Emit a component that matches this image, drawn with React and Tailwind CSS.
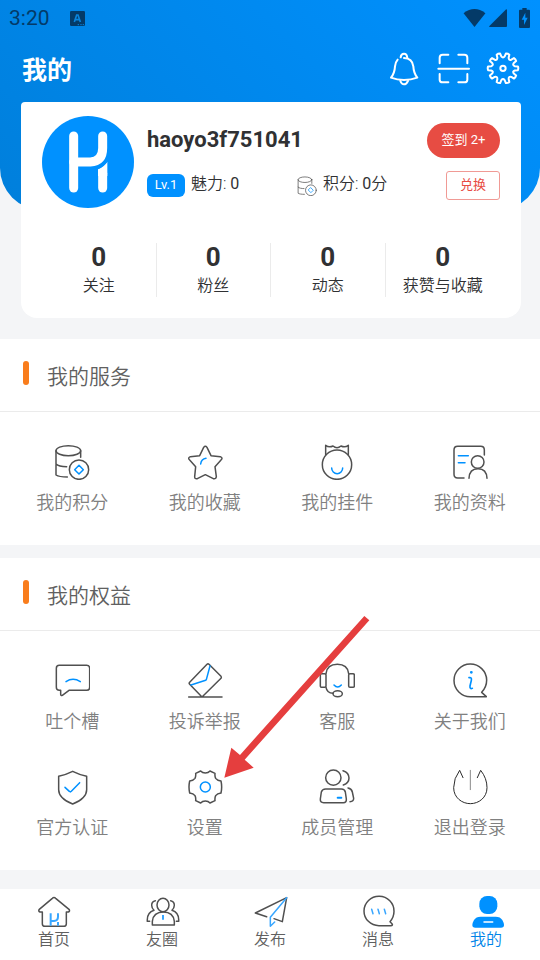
import React from "react";

const DARK = "#505050";
const BLUE = "#0091ff";

function Icon({ children, className = "size-9", stroke = DARK, width = 4.5 }) {
  return (
    <svg
      viewBox="0 0 108 108"
      className={className}
      fill="none"
      stroke={stroke}
      strokeWidth={width}
      strokeLinecap="round"
      strokeLinejoin="round"
      aria-hidden="true"
    >
      {children}
    </svg>
  );
}

const PointsIcon = ({ className, width }) => (
  <Icon className={className} width={width}>
    <ellipse cx="43" cy="20" rx="37" ry="15" />
    <path d="M6 20V93C12 97 24 99 40 99M6 60C12 66 24 68 38 68M80 20V40" />
    <circle cx="75" cy="77" r="29" />
    <path d="M75 64L88 77L75 90L62 77Z" stroke={BLUE} />
  </Icon>
);

const StarIcon = () => (
  <Icon>
    <path d="M50 10Q55 3 60 10L72 35L100 38Q109 42 102 48L84 68L88 98Q87 106 79 104L55 92L31 104Q23 106 23 98L26 68L8 48Q1 42 10 38L38 35Z" />
    <path d="M41 60Q43 45 57 43" stroke={BLUE} />
  </Icon>
);

const PendantIcon = () => (
  <Icon>
    <circle cx="54" cy="62" r="44" />
    <path d="M20 32V4Q30 12 42 6Q48 11 54 11Q60 11 66 6Q78 12 88 4V32" />
    <path d="M38 72A16.500 17 0 0 0 71 72" stroke={BLUE} />
  </Icon>
);

const ProfileIcon = () => (
  <Icon>
    <path d="M97 33V18Q97 7 86 7H17Q6 7 6 18V91Q6 102 17 102H36" />
    <circle cx="77" cy="54" r="19" />
    <path d="M51 103Q52 74 78 74Q104 74 105 103" />
    <path d="M19 35H49M19 56H39" stroke={BLUE} />
  </Icon>
);

const ComplaintIcon = () => (
  <Icon>
    <path d="M16 7H98Q107 7 107 16V73Q107 82 98 82H45L25 97Q20 99 20 94V82H16Q7 82 7 73V16Q7 7 16 7Z" />
    <path d="M36 56Q57 42 79 56" stroke={BLUE} />
  </Icon>
);

const ReportIcon = () => (
  <Icon>
    <path d="M60 4Q63 1 66 4L102 40Q104 43 102 46L45 102L8 64Q5 61 8 58ZM5 102H105" />
    <path d="M69 9L58 50L56 52L12 66" stroke={BLUE} />
  </Icon>
);

const ServiceIcon = () => (
  <Icon>
    <rect x="4" y="32" width="17" height="41" rx="4" />
    <rect x="89" y="32" width="17" height="41" rx="4" />
    <path d="M21 32Q24 4 55 4Q86 4 89 32M21 73Q24 90 42 91" />
    <ellipse cx="56" cy="92" rx="14" ry="9" />
    <path d="M45 66Q56 78 67 66" stroke={BLUE} />
  </Icon>
);

const AboutIcon = () => (
  <Icon>
    <path d="M55 101H103L89 88Q104 72 104 51A49 49 0 1 0 55 101Z" />
    <circle cx="58" cy="28" r="2" stroke={BLUE} />
    <path d="M51 44Q60 42 58 52L54 69Q53 79 61 76" stroke={BLUE} strokeWidth="5" />
  </Icon>
);

const ShieldIcon = () => (
  <Icon>
    <path d="M56 7Q76 17 98 22V62Q98 88 56 105Q14 88 14 62V22Q36 17 56 7Z" />
    <path d="M33 55L46 67Q49 70 52 67L77 41" stroke={BLUE} />
  </Icon>
);

const SettingsIcon = () => (
  <Icon>
    <path d="M41 6Q46 12 55 12Q64 12 69 6L84 13Q83 22 86 28Q91 35 102 36Q106 54 102 72Q91 73 86 80Q83 86 84 95L69 102Q64 96 55 96Q46 96 41 102L26 95Q27 86 24 80Q19 73 8 72Q4 54 8 36Q19 35 24 28Q27 22 26 13Z" />
    <circle cx="55" cy="54" r="15" stroke={BLUE} />
  </Icon>
);

const MembersIcon = () => (
  <Icon>
    <circle cx="43" cy="26" r="23" />
    <path d="M72 5Q90 11 90 27Q90 42 73 48" />
    <path d="M20 60H67Q77 60 79 69L82 90Q83 101 73 101H14Q3 101 4 90L7 69Q10 60 20 60Z" />
    <path d="M87 57Q98 59 100 69L104 88Q104 98 93 98" />
    <path d="M56 86H67" stroke={BLUE} strokeWidth="6" />
  </Icon>
);

const LogoutIcon = () => (
  <Icon stroke="#2b2b2b" width={3}>
    <path d="M33 26L23 4Q5 28 5 56C5 86 30 104 55 104C80 104 105 86 105 56Q105 28 86 4L76 26" />
    <path d="M55 4V62" stroke="#8a8a8a" />
  </Icon>
);

const HomeIcon = () => (
  <Icon>
    <path d="M49 13Q54 8 59 13L100 47Q102 52 97 54H91V89Q91 97 83 97H27Q19 97 19 89V54H12Q7 52 9 47Z" />
    <path
      d="M44 58V95M44 81H54Q66 80 66 68V58M66 84V95"
      stroke="#38a6ff"
      strokeWidth="6"
      strokeLinecap="butt"
    />
  </Icon>
);

const FriendsIcon = () => (
  <Icon>
    <ellipse cx="57" cy="33" rx="18" ry="20" />
    <path d="M25 93V82Q28 54 58 54Q88 54 91 82V93Z" />
    <path d="M34 20Q23 22 23 34Q23 42 30 49Q8 56 10 82H17M80 20Q91 22 91 34Q91 42 84 49Q106 56 104 82H97" />
    <path d="M57 63V77" stroke="#38a6ff" strokeWidth="6" strokeLinecap="butt" />
  </Icon>
);

const PublishIcon = () => (
  <Icon>
    <path d="M44 68L10 57L104 11L91 83L66 74" />
    <path d="M104 11L55 70V97L68 84" stroke="#38a6ff" />
  </Icon>
);

const MessageIcon = () => (
  <Icon>
    <path d="M57 95H92Q100 94 96 89L90 83Q102 70 102 52A45 44 0 1 0 57 95Z" />
    <path d="M35 46L39 59M54 46L58 59M73 46L77 59" stroke="#38a6ff" />
  </Icon>
);

const MeIcon = () => (
  <Icon stroke="none">
    <rect x="34" y="6" width="54" height="54" rx="23" fill={BLUE} />
    <path d="M38 68H83Q97 68 103 78Q108 87 108 93Q108 101 99 101H22Q13 101 13 93Q13 87 18 78Q24 68 38 68Z" fill={BLUE} />
    <path d="M48 84H74" stroke="#fff" />
  </Icon>
);

const BellIcon = () => (
  <Icon stroke="#fff" width={6}>
    <path d="M38 26Q31 34 30 46Q29 66 18 80Q36 87 57 87Q78 87 97 80Q86 66 85 46Q82 22 57 21" />
    <path d="M47 19Q48 8 57 8Q66 8 67 21M46 90Q50 100 57 100Q64 100 69 90" />
  </Icon>
);

const ScanIcon = () => (
  <Icon stroke="#fff" width={6}>
    <path d="M14 37V20Q14 11 23 11H40M70 11H88Q97 11 97 20V37M14 69V86Q14 94 23 94H40M70 94H88Q97 94 97 86V69M10 53H102" />
  </Icon>
);

const COG_PATH =
  Array.from({ length: 10 }, (_, i) => {
    const at = (deg, r) => {
      const a = ((i * 36 + deg) * Math.PI) / 180;
      return `${(54 + r * Math.cos(a)).toFixed(1)} ${(52 + r * Math.sin(a)).toFixed(1)}`;
    };
    return `${i ? "L" : "M"}${at(-7, 45)}Q${at(0, 47)} ${at(7, 45)}L${at(10, 36)}Q${at(18, 29)} ${at(26, 36)}`;
  }).join("") + "Z";

const CogIcon = () => (
  <Icon stroke="#fff" width={6}>
    <path d={COG_PATH} />
    <circle cx="54" cy="52" r="8" />
  </Icon>
);

function StatusBar() {
  return (
    <div className="flex h-9 items-center pr-[10px] pl-[9px] text-[#043a68]">
      <span className="font-[Roboto] text-[21px] leading-9">3:20</span>
      <svg viewBox="0 0 45 45" className="ml-5 size-[15px]" aria-hidden="true">
        <rect width="45" height="45" rx="4" fill="currentColor" />
        <path d="M13 33L20 12H24L31 33M16 26H28" fill="none" stroke="#0a84dc" strokeWidth="5" />
        <path d="M23 41H27M31 41H35M38 41H42" stroke="#0a84dc" strokeWidth="3" />
      </svg>
      <svg viewBox="0 0 68 56" className="ml-auto h-[18px] w-[23px]" fill="currentColor" aria-hidden="true">
        <path d="M34 56L0 13Q34 -13 68 13Z" />
      </svg>
      <svg viewBox="0 0 54 54" className="ml-[3px] size-[18px]" fill="currentColor" aria-hidden="true">
        <path d="M54 3V51Q54 54 51 54H2Q-1 54 2 50L50 2Q54 -1 54 3Z" />
      </svg>
      <svg viewBox="0 0 33 60" className="ml-3 h-5 w-[11px]" aria-hidden="true">
        <path d="M10 0H23V5H30Q33 5 33 8V57Q33 60 30 60H3Q0 60 0 57V8Q0 5 3 5H10Z" fill="currentColor" />
        <path d="M19 14L8 35H15V51L26 29H19Z" fill="#0091ff" />
      </svg>
    </div>
  );
}

function Avatar() {
  return (
    <svg viewBox="0 0 276 276" className="size-[92px] shrink-0" role="img" aria-label="haoyo3f751041">
      <circle cx="138" cy="138" r="138" fill="#0091ff" />
      <g fill="none" stroke="#fff" strokeWidth="27" strokeLinecap="round">
        <path d="M95 60V216" />
        <path d="M95 138H145Q182 136 182 96V60" />
        <path d="M182 172V216" />
      </g>
      <path d="M168 160Q187 150 196 137V180H168Z" fill="#fff" />
      <path d="M160 160Q188 153 199 126" fill="none" stroke="#0091ff" strokeWidth="5" />
    </svg>
  );
}

const STATS = [
  ["0", "关注"],
  ["0", "粉丝"],
  ["0", "动态"],
  ["0", "获赞与收藏"],
];

function ProfileCard() {
  return (
    <section className="-mt-[108px] mr-[19px] ml-[21px] rounded-t-[4px] rounded-b-[16px] bg-white px-[21px] pt-[14px] pb-[21px] text-[#303133]">
      <div className="flex">
        <Avatar />
        <div className="ml-[13px] flex-1 pt-[7px]">
          <div className="flex items-center justify-between">
            <h2 className="mb-[2px] text-[22px] leading-8 font-bold">haoyo3f751041</h2>
            <button className="h-[35px] w-[73px] rounded-full bg-[#e74c43] pb-[2px] text-[13px] text-white">
              签到 2+
            </button>
          </div>
          <div className="mt-[13px] flex items-center text-[16px] leading-6">
            <div className="flex w-[150px] items-center gap-[6px]">
              <span className="h-[23px] w-[38px] rounded-[6px] bg-[#0091ff] text-center text-[13px] leading-[22px] text-white">
                Lv.1
              </span>
              <span className="mb-1 font-[350]">
                魅力: <span className="font-normal">0</span>
              </span>
            </div>
            <div className="flex items-center gap-[6px]">
              <PointsIcon className="size-5" width={4} />
              <span className="mb-1 font-[350]">
                积分: <span className="font-normal">0</span>分
              </span>
            </div>
            <button className="ml-auto h-[29px] w-[54px] rounded-[3px] border border-[#f09a95] pb-[2px] text-[13px] text-[#e74c43]">
              兑换
            </button>
          </div>
        </div>
      </div>
      <div className="mt-[35px] grid grid-cols-4 divide-x divide-[#ebebeb]">
        {STATS.map(([value, label]) => (
          <div key={label} className="h-[54px] text-center">
            <div className="text-[26px] leading-[29px] font-bold">{value}</div>
            <div className="pt-[2px] text-[16px] leading-6 font-[350] whitespace-nowrap">{label}</div>
          </div>
        ))}
      </div>
    </section>
  );
}

function Panel({ title, items, children }) {
  return (
    <section className="relative bg-white">
      <div className="flex h-[73px] items-center gap-[18px] border-b border-[#ebebeb] pl-[23px]">
        <span className="mb-1 h-6 w-[6px] rounded-[3px] bg-[#f97d1c]" />
        <h2 className="pt-1 text-[21px] leading-8 font-[350] text-[#606060]">{title}</h2>
      </div>
      <div className="grid grid-cols-4 gap-y-[35px] pt-8 pr-1 pb-[30px] pl-[6px]">
        {items.map(([label, Glyph]) => (
          <button
            key={label}
            className="flex flex-col items-center gap-[11px] text-[18px] leading-6 font-[350] text-[#808080]"
          >
            <Glyph />
            <span>{label}</span>
          </button>
        ))}
      </div>
      {children}
    </section>
  );
}

const SERVICES = [
  ["我的积分", PointsIcon],
  ["我的收藏", StarIcon],
  ["我的挂件", PendantIcon],
  ["我的资料", ProfileIcon],
];

const RIGHTS = [
  ["吐个槽", ComplaintIcon],
  ["投诉举报", ReportIcon],
  ["客服", ServiceIcon],
  ["关于我们", AboutIcon],
  ["官方认证", ShieldIcon],
  ["设置", SettingsIcon],
  ["成员管理", MembersIcon],
  ["退出登录", LogoutIcon],
];

const TABS = [
  ["首页", HomeIcon],
  ["友圈", FriendsIcon],
  ["发布", PublishIcon],
  ["消息", MessageIcon],
  ["我的", MeIcon],
];

export default function App() {
  return (
    <div className="flex min-h-screen flex-col bg-[#f4f5f7] font-[Roboto,'Noto_Sans_CJK_SC',sans-serif]">
      <header className="rounded-b-[42px] bg-linear-45 from-[#007fdb] to-[#0091ff] pb-[108px]">
        <StatusBar />
        <div className="flex h-[66px] items-center justify-between pr-[19px] pl-[22px]">
          <h1 className="pt-1 text-[25px] leading-9 font-bold text-white">我的</h1>
          <div className="flex gap-[14px]">
            <button aria-label="通知"><BellIcon /></button>
            <button aria-label="扫一扫"><ScanIcon /></button>
            <button aria-label="设置"><CogIcon /></button>
          </div>
        </div>
      </header>

      <main className="flex flex-col">
        <ProfileCard />
        <div className="mt-[21px] flex flex-col gap-[13px]">
          <Panel title="我的服务" items={SERVICES} />
          <Panel title="我的权益" items={RIGHTS}>
            <svg
              viewBox="60 45 450 495"
              className="pointer-events-none absolute top-[57px] left-[220px] h-[165px] w-[150px]"
              aria-hidden="true"
            >
              <path d="M493 48L508 61L134 479L161 503L73 533L94 443L120 465Z" fill="#e53e3e" />
            </svg>
          </Panel>
        </div>
      </main>

      <nav className="sticky bottom-0 mt-auto grid h-[71px] grid-cols-5 bg-white pt-[5px]">
        {TABS.map(([label, Glyph]) => (
          <a
            key={label}
            href="#"
            className={`flex flex-col items-center text-[16px] leading-5 font-[350] ${label === "我的" ? "text-[#0084e8]" : "text-[#606060]"}`}
          >
            <Glyph />
            <span>{label}</span>
          </a>
        ))}
      </nav>
    </div>
  );
}
